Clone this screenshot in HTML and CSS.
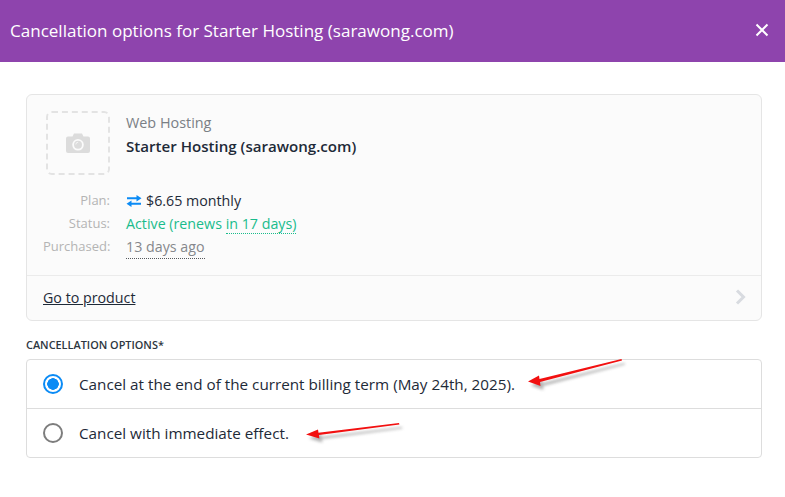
FILE: index.html
```html
<!DOCTYPE html>
<html lang="en">
<head>
<meta charset="utf-8">
<title>Cancellation options</title>
<link rel="stylesheet" href="styles.css">
</head>
<body>
<header class="modal-header">
  <h1 class="modal-title">Cancellation options for Starter Hosting (sarawong.com)</h1>
  <svg class="close-icon" width="14" height="14" viewBox="0 0 14 14"><path d="M1.5 1.5l11 11M12.5 1.5l-11 11" stroke="#fff" stroke-width="2" fill="none"/></svg>
</header>
<main class="modal-body">
  <section class="card">
    <div class="card-main">
      <div class="product">
        <div class="thumb">
          <svg width="26" height="22" viewBox="0 0 26 22"><path fill-rule="evenodd" fill="#dcdcdc" d="M9 1.5h8l1.5 3H23a2 2 0 0 1 2 2V19a2 2 0 0 1-2 2H3a2 2 0 0 1-2-2V6.500a2 2 0 0 1 2-2h4.500zM13 7a5.800 5.800 0 1 0 0 11.600A5.800 5.800 0 0 0 13 7z"/><circle cx="13" cy="12.800" r="4" fill="#dcdcdc"/><path d="M10.800 12.500a2.400 2.400 0 0 1 2.400-2.300" stroke="#f4f4f4" stroke-width="1" fill="none"/></svg>
        </div>
        <div class="product-text">
          <div class="product-type">Web Hosting</div>
          <div class="product-name">Starter Hosting (sarawong.com)</div>
        </div>
      </div>
      <dl class="details">
        <dt>Plan:</dt>
        <dd class="plan"><svg width="16" height="12" viewBox="0 0 16 12"><path fill="#0b8bf5" d="M1 2.200h9.500V0L15.500 3.300 10.500 6.500V4.300H1zM15 7.700H5.500V5.600L.5 8.800 5.500 12V9.800H15z"/></svg>$6.65 monthly</dd>
        <dt>Status:</dt>
        <dd class="status">Active (renews <span class="status-tip">in 17 days)</span></dd>
        <dt>Purchased:</dt>
        <dd class="purchased"><span class="purchased-tip">13 days ago</span></dd>
      </dl>
    </div>
    <div class="card-footer">
      <a class="product-link" href="#">Go to product</a>
      <svg width="11" height="16" viewBox="0 0 11 16"><path d="M2 1.500l6.500 6.500L2 14.500" stroke="#d8dbe0" stroke-width="3" fill="none"/></svg>
    </div>
  </section>
  <div class="options-label">CANCELLATION OPTIONS*</div>
  <div class="options">
    <label class="option"><span class="radio radio-on"></span>Cancel at the end of the current billing term (May 24th, 2025).</label>
    <label class="option"><span class="radio"></span>Cancel with immediate effect.</label>
  </div>
</main>
<svg class="annotations" width="785" height="497" viewBox="0 0 785 497">
  <defs><filter id="arrow-shadow" x="-10%" y="-50%" width="120%" height="220%"><feGaussianBlur stdDeviation="1.500"/></filter></defs>
  <g fill="#777" opacity=".55" filter="url(#arrow-shadow)" transform="translate(3 4)">
    <path d="M528 381.500l11-6 .5 3.500 82-20 .5 1.500-82 21.500.5 4z"/>
    <path d="M306 434.500l12-5 .5 3.200 80.500-9.700 .4 1.500-80.500 10.500 .5 3.500z"/>
  </g>
  <g fill="#f21010">
    <path d="M528 381.500l11-6 .5 3.500 82-20 .5 1.500-82 21.500.5 4z"/>
    <path d="M306 434.500l12-5 .5 3.200 80.500-9.700 .4 1.500-80.500 10.500 .5 3.500z"/>
  </g>
</svg>
</body>
</html>
```

FILE: styles.css
```css
* { box-sizing: border-box; }
html, body { margin: 0; padding: 0; }
body {
  position: relative;
  width: 785px;
  height: 497px;
  overflow: hidden;
  background: #fff;
  color: #1e2a38;
  font-family: "Open Sans", "Noto Sans", sans-serif;
  font-size: 14.25px;
}
.modal-header {
  height: 62px;
  background: #8e44ad;
  display: flex;
  align-items: center;
  justify-content: space-between;
  padding: 0 16px 2px 10px;
}
.modal-title {
  margin: 0;
  color: #fff;
  font-size: 17.05px;
  font-weight: 400;
}
.modal-body { padding: 32px 23px 0 26px; }
.card {
  height: 227px;
  border: 1px solid #e5e5e5;
  border-radius: 6px;
  background: #fbfbfb;
  display: flex;
  flex-direction: column;
}
.card-main { flex: 1; padding: 16px 16px 0; }
.product { display: flex; gap: 16px; }
.thumb {
  width: 64px;
  height: 64px;
  margin-left: 3px;
  border: 2px dashed #e3e3e3;
  border-radius: 6px;
  display: flex;
  align-items: center;
  justify-content: center;
}
.product-type { color: #7a7f85; line-height: 24px; font-size: 14.4px; }
.product-name { font-weight: 600; line-height: 23px; font-size: 15.1px; }
.details {
  margin: 14px 0 0;
  display: grid;
  grid-template-columns: 67px 1fr;
  column-gap: 16px;
  row-gap: 0;
  line-height: 23px;
}
.details dt { color: #b4b4b4; text-align: right; font-size: 13px; }
.details dd { margin: 0; }
.plan { display: flex; align-items: center; gap: 4px; }
.status { color: #1abc8c; }
.status-tip { border-bottom: 1px dotted #1abc8c; }
.purchased { color: #85888c; }
.purchased-tip { border-bottom: 1px dotted #55585c; padding-bottom: 2px; }
.card-footer {
  height: 45px;
  border-top: 1px solid #ebebeb;
  padding: 0 15px 2px 16px;
  display: flex;
  align-items: center;
  justify-content: space-between;
}
.product-link { color: #1e2a38; text-decoration: underline; }
.options-label {
  margin: 17px 0 7px;
  font-size: 10.9px;
  font-weight: 600;
  line-height: 14px;
  color: #2d3640;
}
.options {
  border: 1px solid #ddd;
  border-radius: 4px;
  font-size: 15.25px;
}
.option {
  height: 48px;
  display: flex;
  align-items: center;
  gap: 16px;
  padding: 0 17px 0 16px;
}
.option + .option { border-top: 1px solid #ddd; height: 49px; }
.radio {
  width: 20px;
  height: 20px;
  border: 2px solid #7d7d7d;
  border-radius: 50%;
  flex: none;
  background: #fff;
}
.radio-on {
  border-color: #0b8bf5;
  background: radial-gradient(circle, #0b8bf5 0 5.500px, #fff 6px);
}
.annotations { position: absolute; left: 0; top: 0; pointer-events: none; }
```
